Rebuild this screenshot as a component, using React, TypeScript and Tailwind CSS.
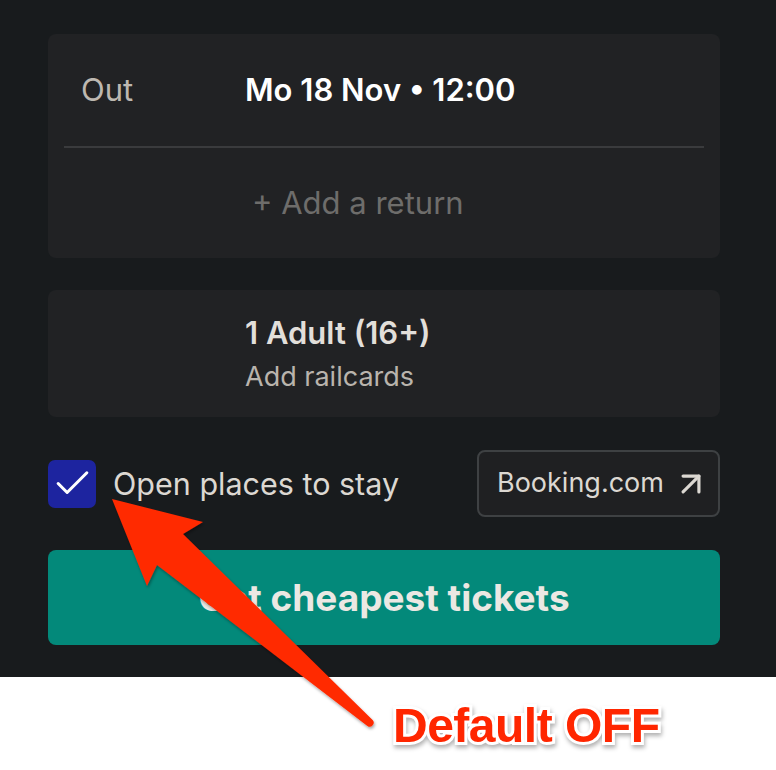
import { Check, ArrowUpRight } from "lucide-react";

function Arrow() {
  return (
    <svg
      className="pointer-events-none absolute left-0 top-0 h-[770px] w-[776px]"
      viewBox="0 0 776 770"
    >
      <defs>
        <filter id="sh" x="-10%" y="-10%" width="130%" height="130%">
          <feDropShadow dx="1" dy="2" stdDeviation="1.5" floodColor="#000" floodOpacity="0.35" />
        </filter>
      </defs>
      <path
        d="M112 499 L203 522 L183 534 L372.6 720 A4 4 0 0 1 367.4 726 L157 565 L147 586 Z"
        fill="#ff2a00"
        filter="url(#sh)"
      />
    </svg>
  );
}

export default function App() {
  return (
    <div className="relative h-[770px] w-[776px] overflow-hidden bg-white font-['Inter',sans-serif]">
      {/* app panel */}
      <div className="flex flex-col bg-[#181b1d] pb-[32px] pl-12 pr-14 pt-[34px]">
        {/* dates */}
        <div className="flex flex-col rounded-lg bg-[#212224]">
          <div className="flex h-[112px] items-center">
            <span className="w-[197px] pl-[33px] text-[31px] text-[#bdb8b1]">Out</span>
            <span className="text-[31px] font-semibold text-white">Mo 18 Nov • 12:00</span>
          </div>
          <div className="mx-4 h-[2px] bg-[#3a3b3d]" />
          <div className="flex h-[110px] items-center pl-[204px]">
            <span className="text-[31px] text-[#6e6d6b]">+ Add a return</span>
          </div>
        </div>

        {/* passengers */}
        <div className="mt-8 flex h-[127px] flex-col justify-center rounded-lg bg-[#212224] pl-[197px]">
          <span className="text-[31px] font-semibold leading-[38px] text-[#e2dfda]">1 Adult (16+)</span>
          <span className="mt-[9px] text-[27px] leading-[32px] text-[#b9b4ad]">Add railcards</span>
        </div>

        {/* stay */}
        <div className="mt-[33px] flex h-[67px] items-center justify-between">
          <div className="flex items-center gap-[17px]">
            <div className="grid h-12 w-12 place-items-center rounded-[7px] bg-[#1d249f]">
              <Check className="h-[43px] w-[43px] text-white" strokeWidth={1.7} />
            </div>
            <span className="text-[30.5px] text-[#dcd8d2]">Open places to stay</span>
          </div>
          <button className="flex h-[67px] w-[243px] items-center gap-[8px] rounded-lg border-2 border-[#3e4143] bg-[#1f2022] pl-[18px] text-[27px] text-[#dcd8d2]">
            Booking.com
            <ArrowUpRight className="h-[38px] w-[38px]" strokeWidth={2} />
          </button>
        </div>

        <button className="mt-[33px] flex h-[95px] items-center justify-center rounded-lg bg-[#03897a] text-[37px] font-bold text-[#ebe8e3]">
          Get cheapest tickets
        </button>
      </div>

      {/* annotation */}
      <div className="flex pl-[393px] pt-[25px]">
        <span className="font-['Liberation_Sans',Arial,sans-serif] text-[48px] font-bold leading-none tracking-[-0.5px] text-[#ff2600] [-webkit-text-stroke:6px_white] [paint-order:stroke_fill] [filter:drop-shadow(1px_3px_2px_rgba(0,0,0,0.3))]">
          Default OFF
        </span>
      </div>

      <Arrow />
    </div>
  );
}
